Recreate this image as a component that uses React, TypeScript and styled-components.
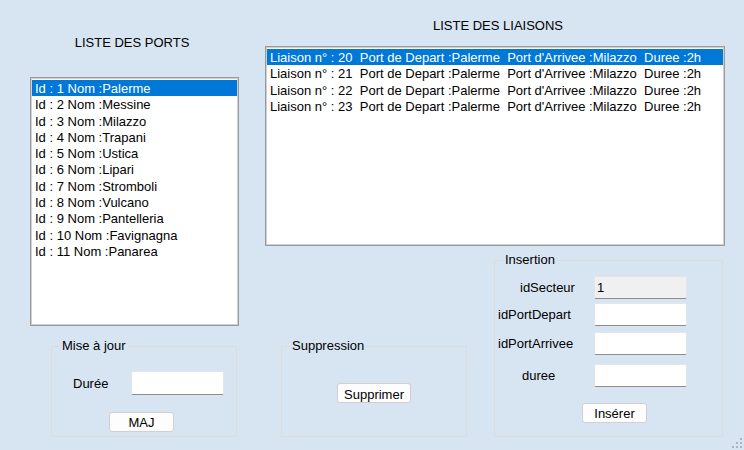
import React from "react";
import styled, { createGlobalStyle } from "styled-components";

const FORM_BG = "#d7e4f2";

const GlobalStyle = createGlobalStyle`
  html, body {
    margin: 0;
    padding: 0;
    background: ${FORM_BG};
  }
`;

const ports = [
    "Palerme",
    "Messine",
    "Milazzo",
    "Trapani",
    "Ustica",
    "Lipari",
    "Stromboli",
    "Vulcano",
    "Pantelleria",
    "Favignagna",
    "Panarea",
];

const liaisons = [20, 21, 22, 23].map((id) => ({
    id,
    depart: "Palerme",
    arrivee: "Milazzo",
    duree: "2h",
}));

const insertionFields = [
    { label: "idSecteur", indent: 25, mt: 15, value: "1", readOnly: true },
    { label: "idPortDepart", indent: 3, mt: 4, value: "" },
    { label: "idPortArrivee", indent: 3, mt: 6, value: "" },
    { label: "duree", indent: 27, mt: 9, value: "" },
];

const App = () => {
    return (
        <>
            <GlobalStyle />
            <Form>
                <LeftColumn>
                    <Title $top={35} $shift={-5}>LISTE DES PORTS</Title>
                    <ListBox $top={27} $height={249}>
                        {ports.map((nom, i) => (
                            <ListItem key={nom} $selected={i === 0}>
                                {`Id : ${i + 1} Nom :${nom}`}
                            </ListItem>
                        ))}
                    </ListBox>

                    <GroupBox $width={186} $height={91} $top={20} $left={21}>
                        <GroupTitle>Mise à jour</GroupTitle>
                        <GroupBody $padTop={24} $padLeft={21}>
                            <InlineRow>
                                <RowLabel $width={58}>Durée</RowLabel>
                                <TextBox $height={24} defaultValue="" />
                            </InlineRow>
                            <Button $width={65} $top={17} $left={36}>MAJ</Button>
                        </GroupBody>
                    </GroupBox>
                </LeftColumn>

                <RightColumn>
                    <Title $top={18} $shift={6}>LISTE DES LIAISONS</Title>
                    <ListBox $top={13} $height={200}>
                        {liaisons.map((l, i) => (
                            <ListItem key={l.id} $selected={i === 0}>
                                {`Liaison n° : ${l.id}  Port de Depart :${l.depart}  Port d'Arrivee :${l.arrivee}  Duree :${l.duree}`}
                            </ListItem>
                        ))}
                    </ListBox>

                    <BottomRow>
                        <GroupBox $width={186} $height={91} $left={16}>
                            <GroupTitle>Suppression</GroupTitle>
                            <GroupBody $padTop={36} $center>
                                <Button $width={74} $dropText>Supprimer</Button>
                            </GroupBody>
                        </GroupBox>

                        <GroupBox $width={229} $height={177} $left={27}>
                            <GroupTitle>Insertion</GroupTitle>
                            <GroupBody>
                                {insertionFields.map((f) => (
                                    <FieldRow key={f.label} $mt={f.mt}>
                                        <FieldLabel $indent={f.indent}>{f.label}</FieldLabel>
                                        <TextBox
                                            $height={23}
                                            defaultValue={f.value}
                                            readOnly={f.readOnly}
                                            $readOnly={f.readOnly}
                                        />
                                    </FieldRow>
                                ))}
                                <Button $width={65} $top={16} $left={87}>Insérer</Button>
                            </GroupBody>
                        </GroupBox>
                    </BottomRow>
                </RightColumn>

                <SizeGrip viewBox="0 0 12 12" width="12" height="12">
                    {[
                        [10, 2],
                        [10, 6],
                        [6, 6],
                        [10, 10],
                        [6, 10],
                        [2, 10],
                    ].map(([cx, cy]) => (
                        <rect key={`${cx}-${cy}`} x={cx - 1} y={cy - 1} width="2" height="2" fill="#a9b4c0" />
                    ))}
                </SizeGrip>
            </Form>
        </>
    );
};

export default App;

const Form = styled.div`
    position: relative;
    display: flex;
    width: 744px;
    height: 450px;
    overflow: hidden;
    background: ${FORM_BG};
    font-family: "Liberation Sans", Arial, sans-serif;
    font-size: 13px;
    color: #000;
`;

const LeftColumn = styled.div`
    display: flex;
    flex-direction: column;
    width: 209px;
    margin-left: 30px;
`;

const RightColumn = styled.div`
    display: flex;
    flex-direction: column;
    width: 460px;
    margin-left: 26px;
`;

const Title = styled.div<{ $top: number; $shift: number }>`
    height: 15px;
    line-height: 15px;
    margin-top: ${({ $top }) => $top}px;
    text-align: center;
    padding-left: ${({ $shift }) => Math.max($shift, 0)}px;
    padding-right: ${({ $shift }) => Math.max(-$shift, 0)}px;
`;

const ListBox = styled.div<{ $top: number; $height: number }>`
    box-sizing: border-box;
    height: ${({ $height }) => $height}px;
    margin-top: ${({ $top }) => $top}px;
    padding: 2px 1px 1px;
    background: #fff;
    border: 1px solid #9a9a9a;
    box-shadow: inset 0 0 0 1px #cfcfcf;
    overflow: hidden;
`;

const ListItem = styled.div<{ $selected?: boolean }>`
    height: 16.3px;
    line-height: 17px;
    padding-left: 3px;
    white-space: pre;
    background: ${({ $selected }) => ($selected ? "#0078d7" : "transparent")};
    color: ${({ $selected }) => ($selected ? "#fff" : "#000")};
`;

const BottomRow = styled.div`
    display: flex;
    align-items: flex-end;
    margin-top: 14px;
`;

const GroupBox = styled.div<{ $width: number; $height: number; $top?: number; $left?: number }>`
    position: relative;
    box-sizing: border-box;
    width: ${({ $width }) => $width}px;
    height: ${({ $height }) => $height}px;
    margin-top: ${({ $top = 0 }) => $top}px;
    margin-left: ${({ $left = 0 }) => $left}px;
    border: 1px solid #dcdcdc;
`;

// sits on the group border, like a WinForms GroupBox caption
const GroupTitle = styled.span`
    position: absolute;
    top: -9px;
    left: 8px;
    padding: 0 2px;
    line-height: 15px;
    background: ${FORM_BG};
`;

const GroupBody = styled.div<{ $padTop?: number; $padLeft?: number; $center?: boolean }>`
    display: flex;
    flex-direction: column;
    align-items: ${({ $center }) => ($center ? "center" : "flex-start")};
    padding-top: ${({ $padTop = 0 }) => $padTop}px;
    padding-left: ${({ $padLeft = 0 }) => $padLeft}px;
`;

const InlineRow = styled.div`
    display: flex;
    align-items: center;
`;

const RowLabel = styled.span<{ $width: number }>`
    width: ${({ $width }) => $width}px;
`;

const FieldRow = styled.div<{ $mt: number }>`
    display: grid;
    grid-template-columns: 99px 93px;
    align-items: center;
    margin-top: ${({ $mt }) => $mt}px;
`;

const FieldLabel = styled.span<{ $indent: number }>`
    padding-left: ${({ $indent }) => $indent}px;
    white-space: nowrap;
`;

const TextBox = styled.input<{ $height: number; $readOnly?: boolean }>`
    box-sizing: border-box;
    width: 93px;
    height: ${({ $height }) => $height}px;
    margin: 0;
    padding: 0 2px;
    border: 1px solid #e5e5e5;
    border-bottom-color: #8c8c8c;
    border-radius: 2px;
    background: ${({ $readOnly }) => ($readOnly ? "#f0f0f0" : "#fff")};
    font-family: inherit;
    font-size: 13px;
    color: #000;
    outline: none;
`;

const Button = styled.button<{ $width: number; $top?: number; $left?: number; $dropText?: boolean }>`
    box-sizing: border-box;
    width: ${({ $width }) => $width}px;
    height: 20px;
    margin: ${({ $top = 0 }) => $top}px 0 0 ${({ $left = 0 }) => $left}px;
    padding: ${({ $dropText }) => ($dropText ? "3px 0 0" : "0")};
    overflow: hidden;
    background: #fdfdfd;
    border: 1px solid #d0d0d0;
    border-radius: 3px;
    font-family: inherit;
    font-size: 13px;
    line-height: 15px;
    color: #000;
    cursor: pointer;
`;

const SizeGrip = styled.svg`
    position: absolute;
    right: 1px;
    bottom: 1px;
`;
